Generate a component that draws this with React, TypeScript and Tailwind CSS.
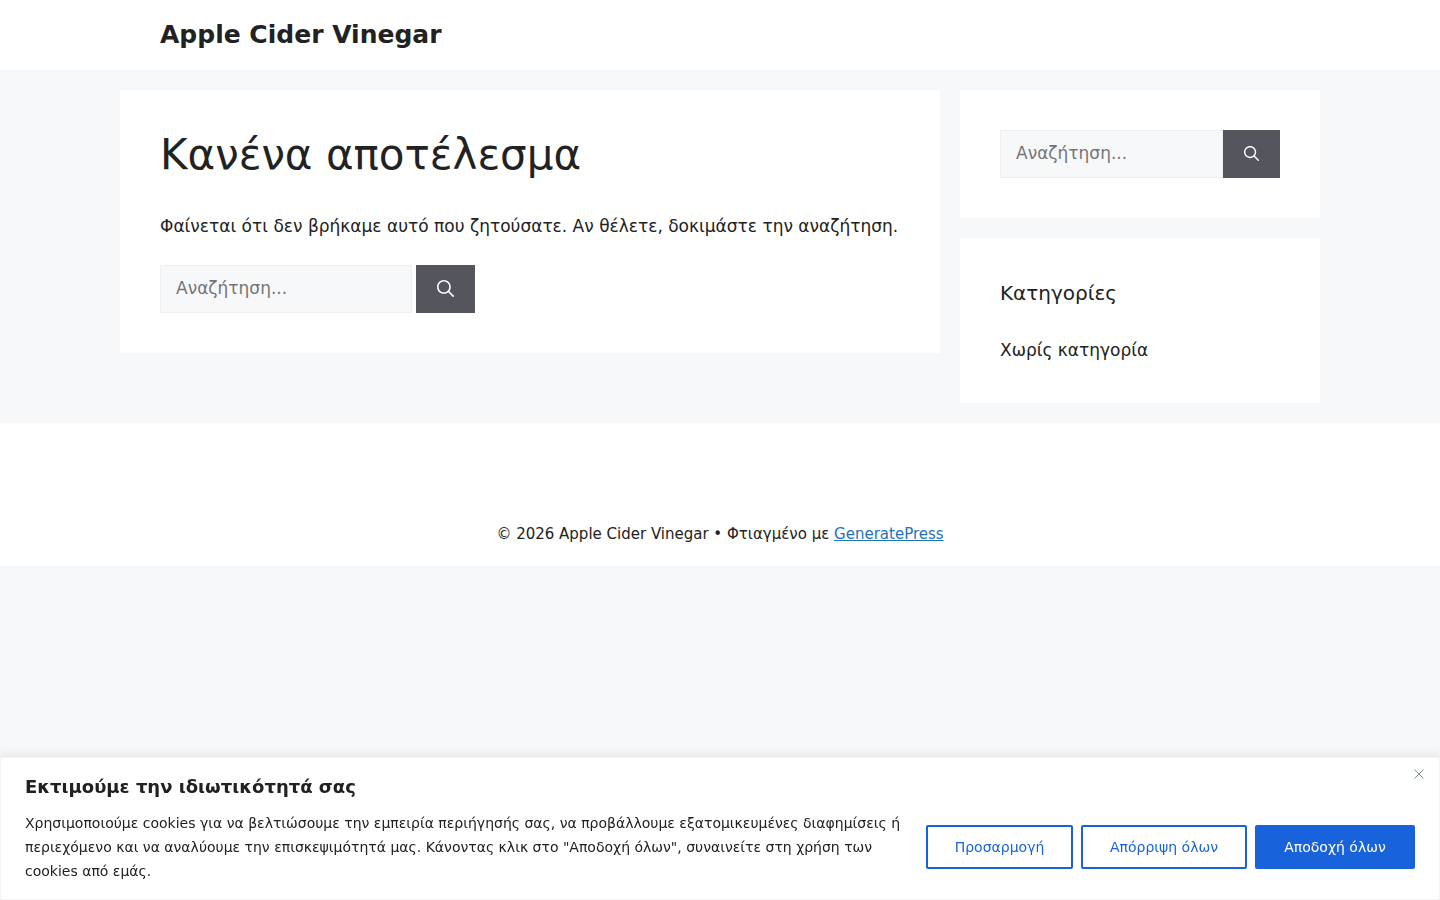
import React from 'react';

function SearchIcon({ className }: { className: string }) {
  return (
    <svg viewBox="0 0 512 512" fill="currentColor" className={className}>
      <path d="M208 48c-88.400 0-160 71.600-160 160s71.600 160 160 160 160-71.600 160-160S296.400 48 208 48zM0 208C0 93.100 93.100 0 208 0s208 93.100 208 208c0 48.300-16.500 92.800-44.100 128.100l132.900 133c9.400 9.400 9.400 24.600 0 34-9.400 9.400-24.600 9.400-34 0l-133-132.900C300.800 399.500 256.300 416 208 416 93.100 416 0 322.900 0 208z" />
    </svg>
  );
}

function SearchForm({ inputWidth, buttonWidth, gap, iconClass }: { inputWidth: string; buttonWidth: string; gap: string; iconClass: string }) {
  return (
    <form className={`flex ${gap}`}>
      <input
        placeholder="Αναζήτηση..."
        className={`${inputWidth} h-[48px] bg-[#f7f8f9] border border-[#f0f0f0] px-[15px] pb-[2px] text-[17px] text-[#666666] placeholder:text-[#757575] outline-none`}
      />
      <button type="button" className={`${buttonWidth} h-[48px] bg-[#55555e] text-white flex items-center justify-center`}>
        <SearchIcon className={iconClass} />
      </button>
    </form>
  );
}

export default function App() {
  return (
    <div lang="el" className="min-h-screen bg-[#f7f8f9] text-[#222222] font-['DejaVu_Sans',sans-serif] text-[17px] leading-[1.5]">
      <header className="bg-white h-[70px] flex items-center px-[160px] pb-[2px]">
        <p className="text-[25px] font-bold leading-none">Apple Cider Vinegar</p>
      </header>

      <div className="w-[1200px] mx-auto pt-[20px] pb-[20px] flex gap-[20px] items-start">
        <main className="w-[820px] bg-white p-[40px] h-[263px]">
          <h1 className="text-[42px] leading-[1.2] mb-[34px] font-normal">Κανένα αποτέλεσμα</h1>
          <p className="mb-[25px] whitespace-nowrap">
            Φαίνεται ότι δεν βρήκαμε αυτό που ζητούσατε. Αν θέλετε, δοκιμάστε την αναζήτηση.
          </p>
          <SearchForm inputWidth="w-[252px]" buttonWidth="w-[59px]" gap="gap-[4px]" iconClass="w-[17px] h-[17px]" />
        </main>

        <aside className="w-[360px] flex flex-col gap-[20px]">
          <div className="bg-white p-[40px]">
            <SearchForm inputWidth="w-[223px]" buttonWidth="w-[57px]" gap="gap-0" iconClass="w-[15px] h-[15px] mb-[2px]" />
          </div>
          <div className="bg-white px-[40px] pt-[40px] h-[165px]">
            <h2 className="text-[20px] leading-[30px] mb-[30px] font-normal">Κατηγορίες</h2>
            <p>Χωρίς κατηγορία</p>
          </div>
        </aside>
      </div>

      <footer className="bg-white h-[143px] flex justify-center pt-[98px] text-[15px] leading-[26px]">
        <p>
          © 2026 Apple Cider Vinegar • Φτιαγμένο με{' '}
          <a href="#" className="text-[#1e73be] underline">GeneratePress</a>
        </p>
      </footer>

      <div className="fixed bottom-0 left-0 w-full h-[143px] bg-white border border-[#f4f4f4] shadow-[0_-1px_10px_0_rgba(172,171,171,0.3)] px-[24px] pt-[15px] flex">
        <div className="w-[885px]">
          <p className="text-[18px] font-bold leading-[28px] mb-[10px] text-[#212121]">Εκτιμούμε την ιδιωτικότητά σας</p>
          <p className="text-[14px] leading-[24px] text-[#212121]">
            Χρησιμοποιούμε cookies για να βελτιώσουμε την εμπειρία περιήγησής σας, να προβάλλουμε εξατομικευμένες διαφημίσεις ή περιεχόμενο και να αναλύουμε την επισκεψιμότητά μας. Κάνοντας κλικ στο "Αποδοχή όλων", συναινείτε στη χρήση των cookies από εμάς.
          </p>
        </div>
        <div className="flex gap-[8px] ml-auto mt-[52px] h-[44px] text-[14px]">
          <button type="button" className="w-[147px] border-2 border-[#1863dc] rounded-[2px] text-[#1863dc]">Προσαρμογή</button>
          <button type="button" className="w-[166px] border-2 border-[#1863dc] rounded-[2px] text-[#1863dc]">Απόρριψη όλων</button>
          <button type="button" className="w-[160px] bg-[#1863dc] rounded-[2px] text-white">Αποδοχή όλων</button>
        </div>
        <button type="button" className="absolute top-[11px] right-[15px] text-[#6f7f9f]">
          <svg viewBox="0 0 10 10" className="w-[10px] h-[10px]" fill="none" stroke="currentColor" strokeWidth="0.9">
            <path d="M0.500 0.500 9.500 9.500M9.500 0.500 0.500 9.500" />
          </svg>
        </button>
      </div>
    </div>
  );
}
